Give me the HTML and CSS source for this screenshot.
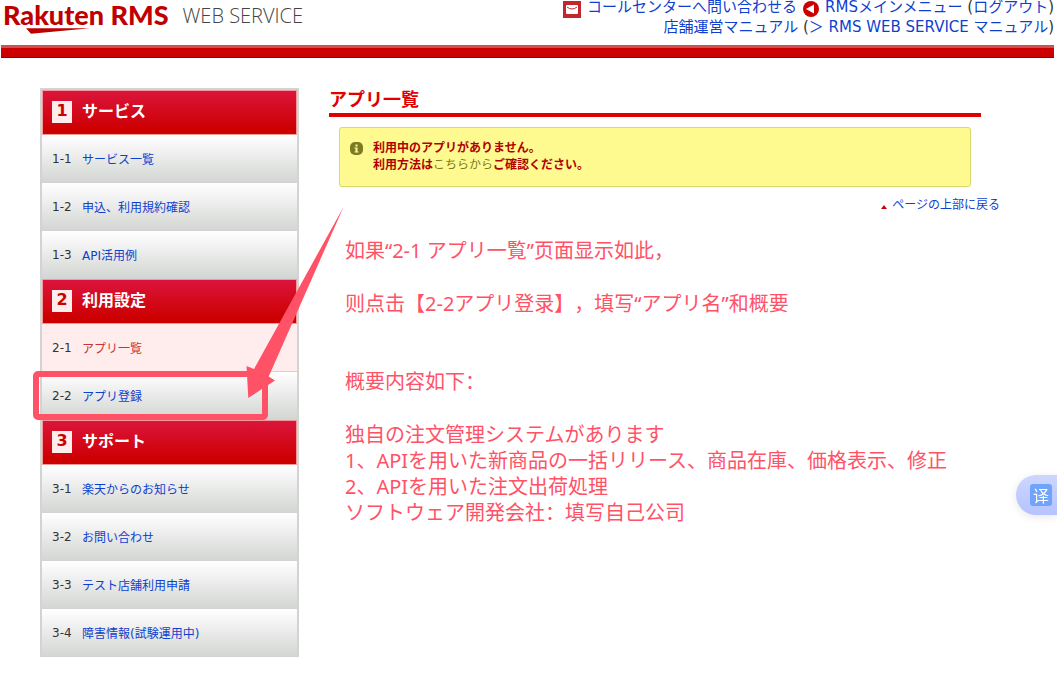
FILE: index.html
```
<!DOCTYPE html>
<html lang="ja">
<head>
    <meta charset="utf-8">
    <title>アプリ一覧 | RMS WEB SERVICE</title>
    <link rel="stylesheet" href="styles.css">
</head>
<body>
    <header class="header">
        <div class="logo">
            <div class="logo-brand">
                Rakuten RMS
                <svg class="logo-swoosh" width="64" height="6" viewBox="0 0 64 6"><path d="M0 0.3H64L5 5.8Z" fill="#bf0000"/></svg>
            </div>
            <div class="logo-service">WEB SERVICE</div>
        </div>
        <div class="header-links">
            <div class="header-row">
                <svg width="18" height="17" viewBox="0 0 18 17"><rect width="18" height="17" fill="#c1272d"/><rect x="3" y="4" width="12" height="9" rx="1" fill="#fff"/><path d="M4 6Q9 10 14 6" fill="none" stroke="#c1272d" stroke-width="1"/></svg>
                <a href="#">コールセンターへ問い合わせる</a>
                <svg width="16" height="16" viewBox="0 0 16 16"><circle cx="8" cy="8" r="8" fill="#c00"/><path d="M3 8L11 3.5V12.5Z" fill="#fff"/></svg>
                <span><a href="#">RMSメインメニュー</a> (<a href="#">ログアウト</a>)</span>
            </div>
            <div><a href="#">店舗運営マニュアル</a> (<a href="#">＞ RMS WEB SERVICE マニュアル</a>)</div>
        </div>
    </header>
    <div class="header-bar"></div>

    <div class="container">
        <nav class="sidebar">
            <h2><span class="num">1</span>サービス</h2>
            <ul>
                <li><span>1-1</span><a href="#">サービス一覧</a></li>
                <li><span>1-2</span><a href="#">申込、利用規約確認</a></li>
                <li><span>1-3</span><a href="#">API活用例</a></li>
            </ul>
            <h2><span class="num">2</span>利用設定</h2>
            <ul>
                <li class="current"><span>2-1</span><a href="#">アプリ一覧</a></li>
                <li class="target">
                    <span>2-2</span><a href="#">アプリ登録</a>
                    <!-- Highlight frame and arrow -->
                    <div class="frame"></div>
                    <svg class="arrow" width="110" height="200" viewBox="240 200 110 200"><path d="M343.500 207L268.700 376.500L275 380.500L248.300 398L246.500 366L254 369Z" fill="#ff5267"/></svg>
                </li>
            </ul>
            <h2><span class="num">3</span>サポート</h2>
            <ul>
                <li><span>3-1</span><a href="#">楽天からのお知らせ</a></li>
                <li><span>3-2</span><a href="#">お問い合わせ</a></li>
                <li><span>3-3</span><a href="#">テスト店舗利用申請</a></li>
                <li><span>3-4</span><a href="#">障害情報(試験運用中)</a></li>
            </ul>
        </nav>

        <main class="content">
            <h1>アプリ一覧</h1>
            <div class="notice">
                <svg width="13" height="13" viewBox="0 0 13 13"><rect width="13" height="13" rx="5" fill="#7c7a25"/><path d="M5.500 2.500h2v2h-2zM4.500 5.500h3v4h1v1h-4v-1h1v-3h-1z" fill="#fffa90"/></svg>
                <p>利用中のアプリがありません。<br>利用方法は<a href="#">こちらから</a>ご確認ください。</p>
            </div>
            <div class="page-top"><a href="#">ページの上部に戻る</a></div>

            <div class="memo" lang="zh-CN">
                <p>如果“2-1 アプリ一覧”页面显示如此，</p>
                <p>则点击【2-2アプリ登录】，填写“アプリ名”和概要</p>
                <p class="memo-outline">概要内容如下：</p>
                <p>独自の注文管理システムがあります<br>1、APIを用いた新商品の一括リリース、商品在庫、価格表示、修正<br>2、APIを用いた注文出荷処理<br>ソフトウェア開発会社：填写自己公司</p>
            </div>
        </main>
    </div>

    <button class="translate" type="button"><span>译</span></button>
</body>
</html>
```
FILE: styles.css
```
* {
    box-sizing: border-box;
}

body {
    margin: 0;
    font-family: "DejaVu Sans", "Noto Sans CJK JP", sans-serif;
    font-size: 12px;
    color: #333;
    background-color: #fff;
}

a {
    color: #0f3fcf;
    text-decoration: none;
}

h1, h2, p, ul {
    margin: 0;
    padding: 0;
}

ul {
    list-style: none;
}

/* Header */
.header {
    display: flex;
    justify-content: space-between;
    height: 45px;
    padding: 0 3px;
}

.logo {
    display: flex;
    white-space: nowrap;
}

.logo-brand {
    position: relative;
    font-family: Lato, sans-serif;
    font-size: 27px;
    font-weight: 900;
    line-height: 30px;
    color: #bf0000;
}

.logo-swoosh {
    position: absolute;
    left: 23px;
    top: 28px;
}

.logo-service {
    margin-left: 14px;
    font-family: "Open Sans", sans-serif;
    font-size: 20px;
    font-weight: 300;
    line-height: 32px;
    color: #444;
}

.header-links {
    font-size: 15px;
    line-height: 21px;
    text-align: right;
    white-space: nowrap;
}

.header-row {
    display: flex;
    justify-content: flex-end;
    gap: 6px;
    height: 17px;
    line-height: 14px;
}

.header-row svg {
    margin-top: 1px;
}

.header-bar {
    height: 13px;
    margin: 0 3px 0 1px;
    background-color: #c00;
    border-top: 3px solid #cc5252;
    border-bottom: 1px solid #900000;
}

/* Columns */
.container {
    display: flex;
    gap: 30px;
    padding: 30px 57px 16px 40px;
}

/* Side menu */
.sidebar {
    flex: 0 0 259px;
    border: 2px solid #d3d3d3;
    border-bottom: 0;
}

.sidebar h2 {
    display: flex;
    align-items: center;
    height: 45px;
    padding: 0 9px 6px;
    font-size: 16px;
    color: #fff;
    background: linear-gradient(#dc143c, #c00 90%);
    border: 1px solid #f09a9a;
}

.sidebar .num {
    width: 20px;
    height: 22px;
    margin: 4px 10px 0 0;
    line-height: 20px;
    text-align: center;
    color: #c00;
    background-color: #ffeded;
}

.sidebar li {
    display: flex;
    align-items: center;
    height: 48px;
    padding: 0 10px;
    background: linear-gradient(#fff, #d3d6d3);
    border-bottom: 1px solid #d3d3d3;
}

.sidebar li span {
    width: 30px;
}

.sidebar li.current {
    background: #ffeded;
}

.sidebar li.current a {
    color: #c33;
}

.sidebar li.target {
    position: relative;
}

.frame {
    position: absolute;
    left: -9px;
    top: -1px;
    width: 235px;
    height: 49px;
    border: 6px solid #ff5267;
    border-radius: 5px;
}

.arrow {
    position: absolute;
    left: 198px;
    top: -172px;
    pointer-events: none;
}

/* Main */
.content {
    flex: 1;
    min-width: 0;
}

.content h1 {
    margin-right: 19px;
    padding-bottom: 1px;
    font-size: 18px;
    line-height: 24px;
    color: #e00000;
    border-bottom: 4px solid #e00000;
}

.notice {
    display: flex;
    gap: 10px;
    height: 60px;
    margin: 10px 29px 0 10px;
    padding: 12px 10px;
    color: #b00000;
    background-color: #fffa90;
    border: 1px solid #dcd870;
    border-radius: 3px;
}

.notice svg {
    margin-top: 2px;
}

.notice p {
    font-weight: bold;
    line-height: 17px;
}

.notice a {
    font-weight: normal;
    color: #7c7a25;
}

.page-top {
    margin-top: 8px;
    line-height: 20px;
    text-align: right;
}

.page-top a::before {
    content: "";
    display: inline-block;
    margin-right: 5px;
    border: 3px solid transparent;
    border-top: 0;
    border-bottom: 4px solid #c00;
}

.memo {
    margin: 23px 0 0 16px;
    font-family: "Noto Sans", "Noto Sans CJK SC", sans-serif;
    font-size: 20px;
    line-height: 26px;
    color: #ff5267;
    white-space: nowrap;
    text-spacing-trim: space-all;
}

.memo p {
    margin-bottom: 27px;
}

.memo .memo-outline {
    margin-top: 52px;
}

/* Translate tab */
.translate {
    position: fixed;
    right: 0;
    top: 475px;
    width: 41px;
    height: 40px;
    padding: 0 0 0 14px;
    background: linear-gradient(#ccd6ff, #b5c3ff);
    border: 0;
    border-radius: 20px 0 0 20px;
    box-shadow: 0 2px 8px rgba(0, 0, 0, 0.1);
    cursor: pointer;
}

.translate span {
    display: block;
    width: 22px;
    height: 22px;
    font-family: "Noto Sans CJK SC", sans-serif;
    font-size: 16px;
    line-height: 22px;
    color: #fff;
    background-color: #70a3fa;
    border-radius: 3px;
}
```
